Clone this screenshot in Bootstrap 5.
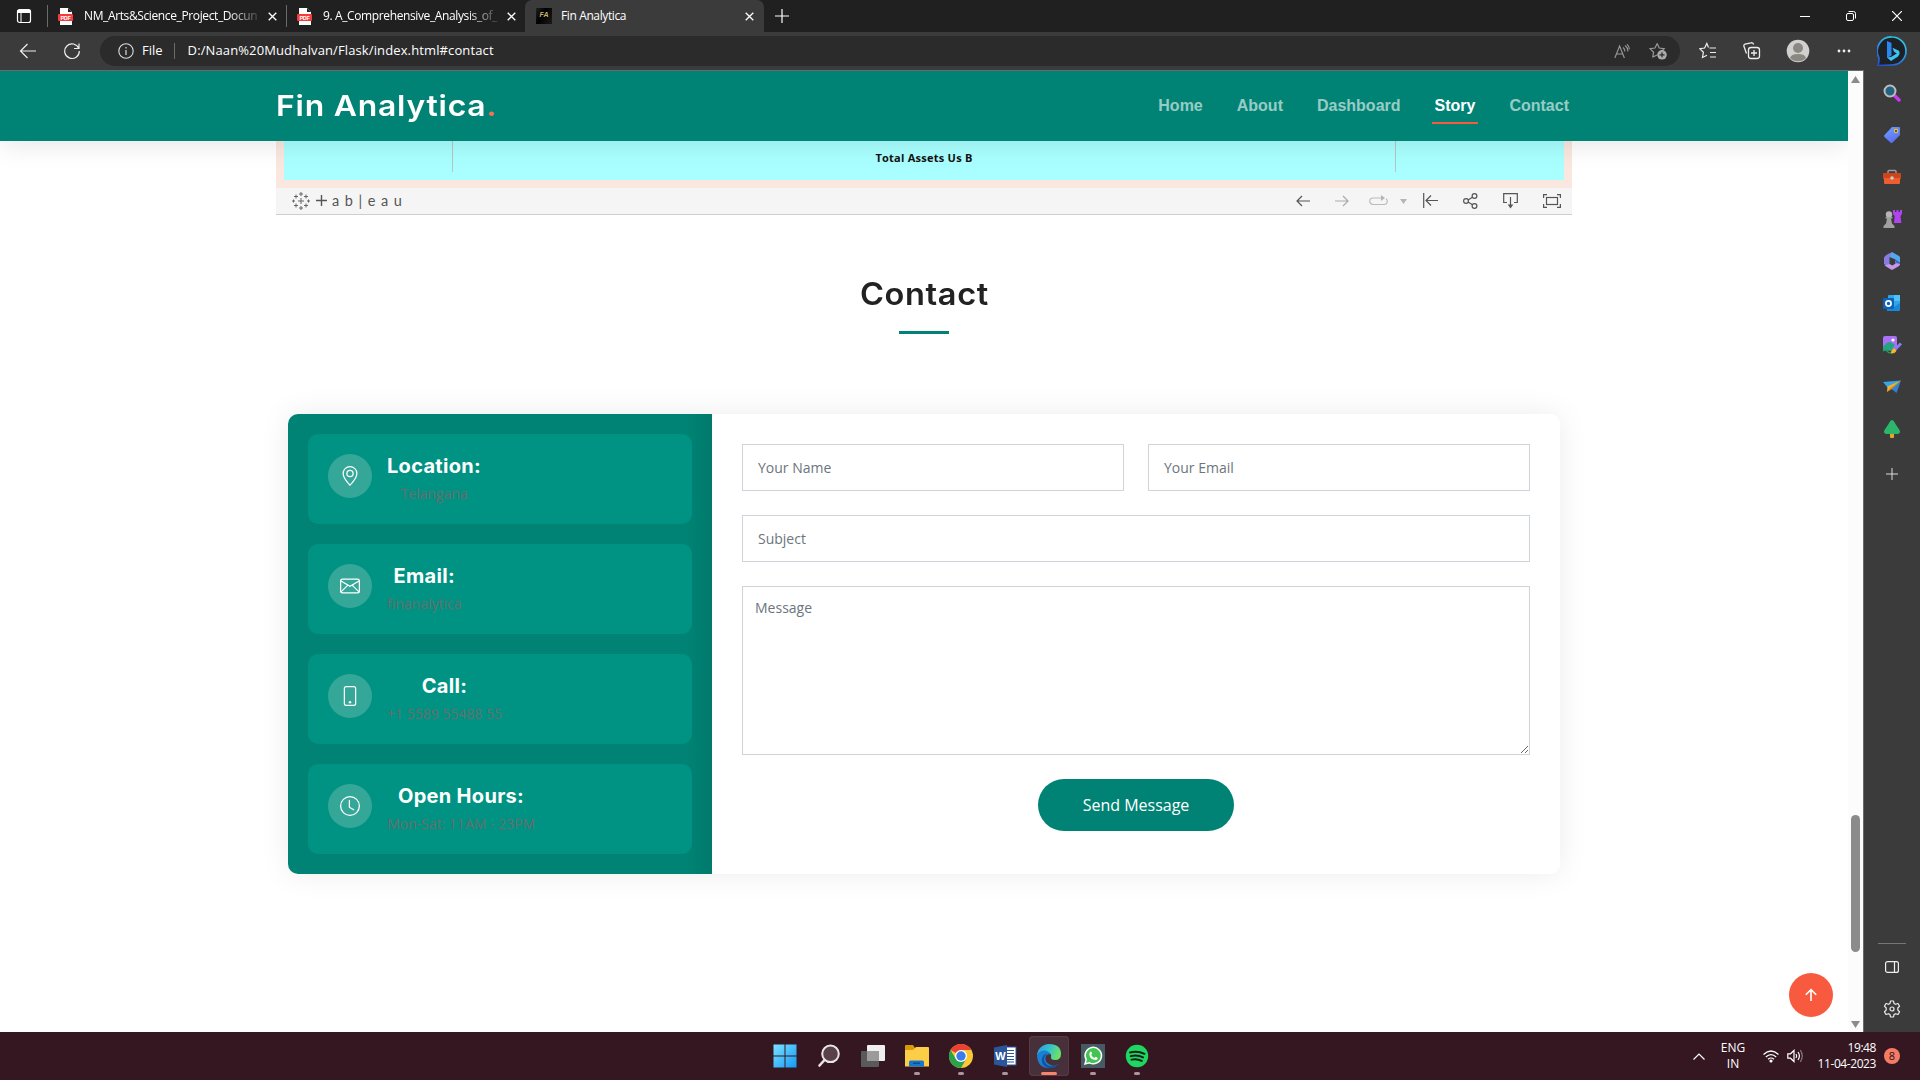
<!DOCTYPE html>
<html lang="en">
<head>
<meta charset="utf-8">
<title>Fin Analytica</title>
<link href="https://cdn.jsdelivr.net/npm/bootstrap@5.3.0/dist/css/bootstrap.min.css" rel="stylesheet">
<style>
html,body{height:100%;overflow:hidden}
body{font-family:"Open Sans",sans-serif;color:#444;background:#fff;font-size:16px}
svg{display:block;flex:none}
.desk{width:1920px;height:1080px}
/* browser chrome */
.tabstrip{height:32px;background:#202020;color:#fff;font:12px "Open Sans",sans-serif}
.tab-cell{height:32px;width:238px;padding:0 9px 0 10px;letter-spacing:-.38px}
.tab-cell.current{width:239px;background:#3b3b3b;border-radius:7px 7px 0 0;padding:0 10px 0 11px}
.tab-title{white-space:nowrap;width:176px;height:20px;line-height:20px}
.tab-title.fade-end{-webkit-mask-image:linear-gradient(90deg,#000 82%,transparent 102%);mask-image:linear-gradient(90deg,#000 82%,transparent 102%)}
.tab-rule{width:1px;height:22px;background:#6b6b6b}
.fav{width:16px;height:16px;background:linear-gradient(120deg,#222,#000 40%,#1b1b1b);color:#c9b26a;font:italic bold 7px/13px "Liberation Sans",sans-serif;text-align:center;letter-spacing:0}
.toolbar-row{height:38px;background:#3b3b3b;color:#fff}
.addr{height:30px;width:1580px;margin-left:19px;background:#2b2b2b;border-radius:15px;font-size:13px;padding:0 13px 0 18px}
.url-text{letter-spacing:.12px}
.side{width:56px;background:#3b3b3b;padding-top:2px}
.side-item{height:42px}
.page-col{width:1864px;border-top:1px solid #6a6a6a;border-right:1px solid #6a6a6a}
.page-view{width:1848px;height:961px;background:#fff;overflow:hidden}
.scroller{width:15px;background:#fcfcfc;padding:5px 3px 4px}
.thumb{width:9px;height:137px;border-radius:5px;background:#8b8b8b;margin-top:732px;margin-bottom:69px}
/* site */
.site-head{height:70px;background:#008374;box-shadow:0 0 30px rgba(0,0,0,.13);position:relative;z-index:2}
.site-name{font:600 29px/70px Inter,sans-serif;color:#fff;letter-spacing:.7px;white-space:nowrap;transform:scaleX(1.1);transform-origin:0 50%}
.site-name span{color:#f96f59}
.menu-link{font:bold 16px/24px "Liberation Sans",sans-serif;color:rgba(255,255,255,.6);text-decoration:none;position:relative}
.menu-link.active{color:#fff}
.menu-link.active::after{content:"";position:absolute;left:-3px;right:-3px;bottom:-6px;height:2px;background:#f85a40}
.viz{width:1296px;margin:0 auto}
.viz-frame{background:#fae8e0;padding:0 8px 8px;height:47px}
.viz-body{background:#a9ffff;height:39px;color:#111;font:bold 11px/34px "Open Sans",sans-serif;letter-spacing:.25px}
.viz-cell{height:31px;border-right:1px solid #b9c4c4}
.viz-bar{height:27px;background:#f5f5f5;border-bottom:1px solid #cfcfcf;padding:0 11px 1px 16px}
.tab-word{font:14.5px/24px Lato,sans-serif;color:#555;letter-spacing:5.6px}
.sect-title{font:600 31px/38px Inter,sans-serif;color:#222;letter-spacing:.6px;margin:60px 0 18px;transform:scaleX(1.05)}
.sect-rule{width:50px;height:3px;background:#008374}
.contact-box{width:1272px;height:460px;border-radius:10px;margin:80px auto 0;box-shadow:0 0 30px rgba(0,0,0,.08)}
.info-pane{width:424px;background:linear-gradient(90deg,#008374 94%,#007a6c);border-radius:10px 0 0 10px;padding:20px;gap:20px}
.info-item{height:90px;border-radius:10px;background:#009282;padding:20px}
.info-icon{width:44px;height:44px;border-radius:50%;background:#34a799}
.info-copy{margin-left:15px}
.info-head{font:700 20px/24px Inter,sans-serif;color:#fff;margin:0 0 5px;letter-spacing:.3px}
.info-text{font:14px/21px "Open Sans",sans-serif;color:#666f6e;margin:0}
.form-pane{width:848px;padding:30px;background:#fff;border-radius:0 10px 10px 0}
.form-pane .form-control{border-radius:0;font-size:14px;border-color:#ced4da;box-shadow:none}
.form-pane .form-control::placeholder{color:#6c757d;opacity:1}
.form-pane input.form-control{padding:12px 15px;height:47px}
.form-pane textarea.form-control{padding:10px 12px;height:169px}
.send{background:#008374;color:#fff;border:0;border-radius:50px;height:52px;width:196px;font-size:16px}
.to-top{position:absolute;left:1789px;top:902px;width:44px;height:44px;border-radius:50%;background:#f85a40}
/* taskbar */
.taskbar{height:48px;background:#351722;color:#fff;font:12px/16px "Open Sans",sans-serif}
.app{width:40px;height:40px;border-radius:4px;position:relative}
.app.on{background:#48303b;box-shadow:inset 0 0 0 1px #523c45}
.app.run::after{content:"";position:absolute;left:17px;bottom:1px;width:6px;height:3px;border-radius:2px;background:#a8979d}
.app.on::after{left:12px;width:16px;background:#f8846c}
.clock{width:72px;letter-spacing:-.42px}
.note-badge{width:16px;height:16px;border-radius:50%;background:#f47c64;color:#301018;font-size:11px}
</style>
</head>
<body>
<div class="desk d-flex flex-column">
  <div class="tabstrip d-flex align-items-center">
    <svg width="16" height="16" class="ms-3" viewBox="0 0 16 16"><rect x="1.5" y="1.5" width="13" height="13" rx="2" fill="none" stroke="#fff" stroke-width="1.2"/><path d="M1.5 2h13v3h-13z" fill="#fff"/><path d="M5 5v9.500" stroke="#fff"/></svg>
    <div class="tab-rule" style="margin-left:15px"></div>
    <div class="tab-cell d-flex align-items-center">
      <svg width="15" height="17" viewBox="0 0 15 17"><path d="M2 0h8l4 4v13H2z" fill="#fff"/><path d="M10 0v4h4z" fill="#222"/><rect y="6" width="15" height="7" rx="1" fill="#f53b3b"/><text x="7.500" y="11.700" font-size="5.500" font-weight="bold" fill="#fff" text-anchor="middle" font-family="Liberation Sans">PDF</text></svg>
      <div class="tab-title fade-end" style="margin-left:11px">NM_Arts&amp;Science_Project_Docun</div>
      <svg width="9" height="9" class="ms-auto" viewBox="0 0 9 9"><path d="M.7.700l7.600 7.600M8.300.700L.7 8.300" stroke="#fff" stroke-width="1.300"/></svg>
    </div>
    <div class="tab-rule"></div>
    <div class="tab-cell d-flex align-items-center">
      <svg width="15" height="17" viewBox="0 0 15 17"><path d="M2 0h8l4 4v13H2z" fill="#fff"/><path d="M10 0v4h4z" fill="#222"/><rect y="6" width="15" height="7" rx="1" fill="#f53b3b"/><text x="7.500" y="11.700" font-size="5.500" font-weight="bold" fill="#fff" text-anchor="middle" font-family="Liberation Sans">PDF</text></svg>
      <div class="tab-title fade-end" style="margin-left:11px">9. A_Comprehensive_Analysis_of_</div>
      <svg width="9" height="9" class="ms-auto" viewBox="0 0 9 9"><path d="M.7.700l7.600 7.600M8.300.700L.7 8.300" stroke="#fff" stroke-width="1.300"/></svg>
    </div>
    <div class="tab-cell current d-flex align-items-center">
      <div class="fav">FA</div>
      <div class="tab-title" style="margin-left:9px">Fin Analytica</div>
      <svg width="9" height="9" class="ms-auto" viewBox="0 0 9 9"><path d="M.7.700l7.600 7.600M8.300.700L.7 8.300" stroke="#fff" stroke-width="1.300"/></svg>
    </div>
    <svg width="14" height="14" style="margin-left:11px" viewBox="0 0 14 14"><path d="M7 0v14M0 7h14" stroke="#fff" stroke-width="1.200"/></svg>
    <div class="ms-auto d-flex align-items-center" style="gap:36px;padding-right:18px">
      <svg width="10" height="10" viewBox="0 0 10 10"><path d="M0 5.500h10" stroke="#fff"/></svg>
      <svg width="10" height="10" viewBox="0 0 10 10" fill="none" stroke="#fff"><rect x=".5" y="2.500" width="7" height="7" rx="1.500"/><path d="M2.500.500H7.500a2 2 0 0 1 2 2V7.500"/></svg>
      <svg width="10" height="10" viewBox="0 0 10 10"><path d="M0 0l10 10M10 0L0 10" stroke="#fff" stroke-width="1.200"/></svg>
    </div>
  </div>
  <div class="toolbar-row d-flex align-items-center">
    <svg width="18" height="16" style="margin-left:19px" viewBox="0 0 18 16"><path d="M17 8H1.500M8.500 1L1.500 8l7 7" fill="none" stroke="#eee" stroke-width="1.200"/></svg>
    <svg width="18" height="18" style="margin-left:26px" viewBox="0 0 18 18"><path d="M15.800 6.500A7.300 7.300 0 1 0 16.300 9M16 1.500v5h-5" fill="none" stroke="#eee" stroke-width="1.200"/></svg>
    <div class="addr d-flex align-items-center">
      <svg width="16" height="16" viewBox="0 0 16 16"><circle cx="8" cy="8" r="7.200" fill="none" stroke="#ddd" stroke-width="1.100"/><path d="M8 7v5M8 4v1.500" stroke="#ddd" stroke-width="1.200"/></svg>
      <span class="ms-2">File</span>
      <div class="tab-rule" style="height:16px;margin:0 13px 0 11px"></div>
      <span class="url-text">D:/Naan%20Mudhalvan/Flask/index.html#contact</span>
      <svg width="16" height="15" class="ms-auto" viewBox="0 0 16 15" fill="none" stroke="#999" stroke-width="1.100"><path d="M.8 14L5.600 2l4.800 12M2.400 10h6.400M9 3.500q2 1.500 1.800 4M11 1.500q3.300 2.500 2.800 6M13 .3q2.600 2.500 2.400 5"/></svg>
      <svg width="18" height="18" style="margin-left:19px" viewBox="0 0 18 18"><path d="M8.200 1.500l2 4.500 5 .6-3 3M4.800 15l-1-0 .8-4.800L1 6.700l5-.7 2.200-4.500M4 15l4-2" fill="none" stroke="#999" stroke-width="1.200"/><circle cx="13" cy="12.800" r="4.800" fill="#aaa"/><path d="M13 10.300v5M10.500 12.800h5" stroke="#2b2b2b" stroke-width="1.200"/></svg>
    </div>
    <div class="d-flex align-items-center" style="margin-left:19px">
      <svg width="18" height="18" viewBox="0 0 18 18" fill="none" stroke="#eee" stroke-width="1.200"><path d="M10.500 6H17M11 10.500h6M11 15h6M9.500 5.500L7.800 1.500 5.600 6 .8 6.700l3.600 3.500L3.500 15.500 8 13.300"/></svg>
      <svg width="18" height="18" style="margin-left:26px" viewBox="0 0 18 18" fill="none" stroke="#eee" stroke-width="1.300"><rect x="5.500" y="5.500" width="11" height="11" rx="2.500"/><path d="M11 8v6M8 11h6M3.500 11.500L1 4.500A2 2 0 0 1 2 2L8 .8A2 2 0 0 1 10.500 2.500"/></svg>
      <svg width="24" height="24" style="margin-left:25px" viewBox="0 0 24 24"><circle cx="12" cy="12" r="11.300" fill="#d2d0ce"/><circle cx="12" cy="9" r="5" fill="#8b8783"/><path d="M4 19q1-4 8-4t8 4a11.300 11.300 0 0 1-16 0" fill="#8b8783"/></svg>
      <svg width="14" height="4" style="margin-left:27px" viewBox="0 0 14 4" fill="#eee"><circle cx="2" cy="2" r="1.400"/><circle cx="7" cy="2" r="1.400"/><circle cx="12" cy="2" r="1.400"/></svg>
      <svg width="30" height="30" style="margin-left:26px" viewBox="0 0 30 30"><defs><linearGradient id="bi" x1="0" y1="1" x2=".5" y2="0"><stop offset="0" stop-color="#2448d8"/><stop offset="1" stop-color="#2cc0e8"/></linearGradient></defs><path d="M15 1a14 14 0 1 1 0 28q-7 0-14 .6 1.200-3 .9-8A14 14 0 0 1 15 1z" fill="#1d2024" stroke="url(#bi)" stroke-width="1.700"/><path d="M10 5l4.500 2v12.500L10 22z" fill="#2a86f0"/><path d="M10 21.500l4 3.500 7-4.500q3-3.500.5-6l-6-2.700 1.500 4 2.800 1.600-5.800 3.600z" fill="#3bc4f3"/></svg>
    </div>
  </div>
  <div class="d-flex" style="height:962px">
    <div class="page-col d-flex">
      <main class="page-view position-relative">
        <header class="site-head">
          <div class="container d-flex align-items-center justify-content-between" style="max-width:1320px">
            <div class="site-name">Fin Analytica<span>.</span></div>
            <nav class="d-flex" style="gap:34px;padding-right:3px">
              <a class="menu-link" href="#">Home</a><a class="menu-link" href="#">About</a><a class="menu-link" href="#">Dashboard</a><a class="menu-link active" href="#">Story</a><a class="menu-link" href="#">Contact</a>
            </nav>
          </div>
        </header>
        <div class="viz">
          <div class="viz-frame"><div class="viz-body d-flex">
            <div class="viz-cell" style="width:169px"></div>
            <div class="viz-cell text-center" style="width:943px">Total Assets Us B</div>
          </div></div>
          <div class="viz-bar d-flex align-items-center">
            <svg width="18" height="18" viewBox="0 0 18 18" stroke="#666" fill="none"><path d="M9 6v6M6 9h6M9 0v4M7 2h4M9 14v4M7 16h4M4 2.500v4M2 4.500h4M14 2.500v4M12 4.500h4M4 11.500v4M2 13.500h4M14 11.500v4M12 13.500h4M1.500 7.500v3M0 9h3M16.500 7.500v3M15 9h3"/></svg>
            <svg width="11" height="11" style="margin:0 5px 0 6px" viewBox="0 0 11 11"><path d="M5.500 0v11M0 5.500h11" stroke="#555" stroke-width="1.400"/></svg>
            <span class="tab-word">ab|eau</span>
            <div class="ms-auto d-flex align-items-center" style="gap:25px">
              <svg width="14" height="12" viewBox="0 0 14 12" fill="none" stroke="#555" stroke-width="1.200"><path d="M14 6H1M6 1L1 6l5 5"/></svg>
              <svg width="14" height="12" viewBox="0 0 14 12" fill="none" stroke="#aaa" stroke-width="1.200"><path d="M0 6h13M8 1l5 5-5 5"/></svg>
              <svg width="38" height="12" style="margin:0 -9px 0 -5px" viewBox="0 0 38 12"><path d="M13 3H4a3.200 3.200 0 0 0 0 6.500h11a3.200 3.200 0 0 0 2-5.800" fill="none" stroke="#bbb" stroke-width="1.200"/><path d="M12 0l4 3-4 3zM31 4h7l-3.500 5z" fill="#b5b5b5"/></svg>
              <svg width="15" height="15" viewBox="0 0 15 15" fill="none" stroke="#555" stroke-width="1.200"><path d="M.7 0v15M15 7.500H3M8 2.500l-5 5 5 5"/></svg>
              <svg width="15" height="16" viewBox="0 0 15 16" fill="none" stroke="#555" stroke-width="1.200"><circle cx="3" cy="8" r="2.400"/><circle cx="11.500" cy="3" r="2.400"/><circle cx="11.500" cy="13" r="2.400"/><path d="M5 7l4.500-2.700M5 9l4.500 2.700"/></svg>
              <svg width="15" height="16" viewBox="0 0 15 16"><path d="M4 9.500H.7V.700h13.600v8.800H11M7.500 4v9" fill="none" stroke="#555" stroke-width="1.200"/><path d="M4.700 11.500h5.600L7.500 15.500z" fill="#555"/></svg>
              <svg width="18" height="14" viewBox="0 0 18 14" fill="none" stroke="#555" stroke-width="1.200"><path d="M.6 4V.600H4M14 .6h3.400V4M.6 10v3.400H4M14 13.400h3.400V10"/><rect x="3.500" y="3.500" width="11" height="7"/></svg>
            </div>
          </div>
        </div>
        <section class="d-flex flex-column align-items-center">
          <h2 class="sect-title">Contact</h2>
          <div class="sect-rule"></div>
          <div class="contact-box d-flex">
            <div class="info-pane d-flex flex-column text-center">
              <div class="info-item d-flex"><div class="info-icon d-flex align-items-center justify-content-center"><svg width="20" height="20" viewBox="0 0 16 16" fill="#fff"><path d="M12.166 8.940c-.524 1.062-1.234 2.120-1.960 3.070A31.493 31.493 0 0 1 8 14.580a31.481 31.481 0 0 1-2.206-2.570c-.726-.95-1.436-2.008-1.960-3.070C3.304 7.867 3 6.862 3 6a5 5 0 0 1 10 0c0 .862-.305 1.867-.834 2.940zM8 16s6-5.686 6-10A6 6 0 0 0 2 6c0 4.314 6 10 6 10z"/><path d="M8 8a2 2 0 1 1 0-4 2 2 0 0 1 0 4zm0 1a3 3 0 1 0 0-6 3 3 0 0 0 0 6z"/></svg></div><div class="info-copy"><h4 class="info-head">Location:</h4><p class="info-text">Telangana</p></div></div>
              <div class="info-item d-flex"><div class="info-icon d-flex align-items-center justify-content-center"><svg width="20" height="20" viewBox="0 0 16 16" fill="none" stroke="#fff"><rect x=".5" y="2.500" width="15" height="11" rx="1.500"/><path d="M.8 4L8 8.300 15.200 4M.8 12.700L6.300 7.300M15.200 12.700L9.700 7.300"/></svg></div><div class="info-copy"><h4 class="info-head">Email:</h4><p class="info-text">finanalytica</p></div></div>
              <div class="info-item d-flex"><div class="info-icon d-flex align-items-center justify-content-center"><svg width="20" height="20" viewBox="0 0 16 16" fill="#fff"><path d="M11 1a1 1 0 0 1 1 1v12a1 1 0 0 1-1 1H5a1 1 0 0 1-1-1V2a1 1 0 0 1 1-1h6zM5 0a2 2 0 0 0-2 2v12a2 2 0 0 0 2 2h6a2 2 0 0 0 2-2V2a2 2 0 0 0-2-2H5z"/><path d="M8 14a1 1 0 1 0 0-2 1 1 0 0 0 0 2z"/></svg></div><div class="info-copy"><h4 class="info-head">Call:</h4><p class="info-text">+1 5589 55488 55</p></div></div>
              <div class="info-item d-flex"><div class="info-icon d-flex align-items-center justify-content-center"><svg width="20" height="20" viewBox="0 0 16 16" fill="#fff"><path d="M8 3.500a.5.500 0 0 0-1 0V9a.5.500 0 0 0 .252.434l3.500 2a.5.500 0 0 0 .496-.868L8 8.710V3.500z"/><path d="M8 16A8 8 0 1 0 8 0a8 8 0 0 0 0 16zm7-8A7 7 0 1 1 1 8a7 7 0 0 1 14 0z"/></svg></div><div class="info-copy"><h4 class="info-head">Open Hours:</h4><p class="info-text">Mon-Sat: 11AM - 23PM</p></div></div>
            </div>
            <form class="form-pane">
              <div class="row gx-4">
                <div class="col-6"><input class="form-control" placeholder="Your Name"></div>
                <div class="col-6"><input class="form-control" placeholder="Your Email"></div>
              </div>
              <input class="form-control mt-4" placeholder="Subject">
              <textarea class="form-control mt-4 d-block" placeholder="Message"></textarea>
              <div class="text-center mt-4"><button type="button" class="send">Send Message</button></div>
            </form>
          </div>
        </section>
        <a class="to-top d-flex align-items-center justify-content-center" href="#"><svg width="14" height="14" viewBox="0 0 14 14"><path d="M7 13V2M1.800 6.800L7 1.600l5.200 5.200" fill="none" stroke="#fff" stroke-width="1.600"/></svg></a>
      </main>
      <div class="scroller"><svg width="9" height="7" viewBox="0 0 9 7"><path d="M4.500 0L9 7H0z" fill="#8b8b8b"/></svg><div class="thumb"></div><svg width="9" height="7" viewBox="0 0 9 7"><path d="M4.500 7L9 0H0z" fill="#8b8b8b"/></svg></div>
    </div>
    <aside class="side d-flex flex-column">
      <div class="side-item d-flex align-items-center justify-content-center"><svg width="18" height="18" viewBox="0 0 18 18"><path d="M11.500 11.500l4.500 4.500" stroke="#c63cf0" stroke-width="3.400" stroke-linecap="round"/><circle cx="7" cy="7" r="5.500" fill="#236382" stroke="#bdbdbd" stroke-width="2"/></svg></div>
      <div class="side-item d-flex align-items-center justify-content-center"><svg width="18" height="18" viewBox="0 0 18 18"><defs><linearGradient id="tg" x1="0" y1="0" x2=".6" y2="1"><stop offset="0" stop-color="#6ba4ff"/><stop offset="1" stop-color="#5c6cf5"/></linearGradient></defs><path d="M9 1h7q1 0 1 1v7L9.500 16.500q-1 1-2 0L1.500 11q-1-1 0-2z" fill="url(#tg)"/><circle cx="13" cy="5" r="1.700" fill="#31406e" stroke="#f2c21a" stroke-width="1.200"/></svg></div>
      <div class="side-item d-flex align-items-center justify-content-center"><svg width="18" height="16" viewBox="0 0 18 16"><path d="M5 5V2.500q0-1 1-1h6q1 0 1 1V5" fill="none" stroke="#9b9b9b" stroke-width="1.500"/><rect y="4" width="18" height="6" rx="1" fill="#cf4418"/><path d="M1 9h16v5q0 1-1 1H2q-1 0-1-1z" fill="#ee5d30"/><circle cx="9" cy="9" r="1.800" fill="#ccc"/></svg></div>
      <div class="side-item d-flex align-items-center justify-content-center"><svg width="19" height="18" viewBox="0 0 19 18"><path d="M10 0h2v2h1.500V0h2v2H17V0h2v4l-1.500 2 .8 7H11l.7-7L10 4z" fill="#b244f0"/><circle cx="6" cy="4.500" r="3.200" fill="#b5b5b5"/><path d="M2.500 7h7v1.600H8l1 4.800 2.500 2.600v2h-11v-2L3 13.400 4 8.600H2.500z" fill="#a0a0a0"/></svg></div>
      <div class="side-item d-flex align-items-center justify-content-center"><svg width="18" height="18" viewBox="0 0 18 18"><path d="M6 1.500L9.500 0 9 3 6.500 5v7.500L4 14.500 1 12V6q.3-2 5-4.500z" fill="#8a7be0"/><path d="M9 0l7 4q1.200.8 1 2v6l-4.500-2V7.500L6.500 5 8 2z" fill="#53a7ec"/><path d="M17 9v3q0 1-1 2l-6 3.500q-1 .7-2 0L1.500 13.500l5-1.500 3 1.500 3-2V9z" fill="#c597e8"/><path d="M12.500 7.500L17 10v2l-4.500-1z" fill="#386ccc"/></svg></div>
      <div class="side-item d-flex align-items-center justify-content-center"><svg width="18" height="18" viewBox="0 0 18 18"><rect x="5" y="1" width="12" height="12" rx="1" fill="#32a4e8"/><path d="M11 1h6v6h-6z" fill="#4dc3f5"/><path d="M4 9l7 4 6-4v7q0 1-1 1H4z" fill="#1789d8"/><rect y="4" width="11" height="11" rx="1" fill="#0b62b8"/><circle cx="5.500" cy="9.500" r="2.600" fill="none" stroke="#fff" stroke-width="1.700"/></svg></div>
      <div class="side-item d-flex align-items-center justify-content-center"><svg width="20" height="19" viewBox="0 0 20 19"><rect x="1" y="0" width="14" height="13" rx="2" fill="#aa70f5"/><circle cx="11" cy="4" r="1.600" fill="#fff"/><path d="M1 11q5-7 9-4l3 2-4 6-8-1z" fill="#25a482"/><path d="M1 15q3-2 4 0t4 2" stroke="#1fa060" stroke-width="1.500" fill="none"/><path d="M19 7.500L12.500 14" stroke="#8b7bf5" stroke-width="3"/><path d="M12.500 12.500q-3.500 0-3.500 5 4 .5 5.500-3z" fill="#f3b925"/></svg></div>
      <div class="side-item d-flex align-items-center justify-content-center"><svg width="18" height="14" viewBox="0 0 18 14"><path d="M0 2L18 .5 5 8z" fill="#36a6ea"/><path d="M18 .5L13.500 13 8 8.500z" fill="#2c83d8"/><path d="M18 .5L4.500 6.500 4 12z" fill="#f2b632"/><path d="M18 .5L7 8l-3 4 5-3z" fill="#d98b1c"/></svg></div>
      <div class="side-item d-flex align-items-center justify-content-center"><svg width="16" height="18" viewBox="0 0 16 18"><rect x="6" y="12" width="4" height="6" rx="1" fill="#e8a422"/><path d="M8 0q1.500 0 3.500 4l4 6q1.500 4-2 4h-11q-3.500 0-2-4l4-6Q6.500 0 8 0z" fill="#2bb66c"/></svg></div>
      <div class="side-item d-flex align-items-center justify-content-center" style="height:48px"><svg width="12" height="12" viewBox="0 0 12 12"><path d="M6 0v12M0 6h12" stroke="#ddd"/></svg></div>
      <div class="mt-auto d-flex flex-column align-items-center">
        <div style="width:28px;height:1px;background:#767676;margin-bottom:17px"></div>
        <svg width="14" height="12" viewBox="0 0 14 12" fill="none" stroke="#eee" stroke-width="1.200"><rect x=".6" y=".6" width="12.800" height="10.800" rx="2"/><path d="M9.500.600v10.800"/></svg>
        <svg width="18" height="18" style="margin:27px 0 14px" viewBox="0 0 18 18" fill="none" stroke="#eee" stroke-width="1.200"><circle cx="9" cy="9" r="2"/><path d="M7.500 1h3l.5 2.400 1.500.9L15 3.500l1.600 2.700-1.800 1.800v2l1.800 1.800L15 14.500l-2.500-.8-1.500.9-.5 2.400h-3L7 14.600l-1.500-.9-2.500.8-1.600-2.700L3.200 10V8L1.400 6.200 3 3.500l2.500.8L7 3.400z" stroke-linejoin="round"/></svg>
      </div>
    </aside>
  </div>
  <footer class="taskbar d-flex align-items-center">
    <div class="d-flex" style="margin-left:765px;gap:4px">
      <div class="app d-flex align-items-center justify-content-center"><svg width="24" height="24" viewBox="0 0 24 24"><defs><linearGradient id="wn" x1="0" y1="0" x2="1" y2="1"><stop offset="0" stop-color="#7be3ff"/><stop offset="1" stop-color="#1398f5"/></linearGradient></defs><path d="M.5.500h11v11H.5zM12.500.500h11v11h-11zM.5 12.500h11v11H.5zM12.500 12.500h11v11h-11z" fill="url(#wn)"/></svg></div>
      <div class="app d-flex align-items-center justify-content-center"><svg width="24" height="24" viewBox="0 0 24 24"><circle cx="13.500" cy="9.800" r="8.300" fill="#5a4049" stroke="#e9e5e6" stroke-width="2"/><path d="M7.500 16L2.500 21.500" stroke="#e9e5e6" stroke-width="2.600" stroke-linecap="round"/></svg></div>
      <div class="app d-flex align-items-center justify-content-center"><svg width="24" height="24" viewBox="0 0 24 24"><rect x="6" y="1" width="18" height="16" rx="1" fill="#f0efef"/><rect x="0" y="7" width="18" height="16" rx="1" fill="#5a5a5a"/><path d="M6 7h12v10H6z" fill="#9b9b9b"/></svg></div>
      <div class="app run d-flex align-items-center justify-content-center"><svg width="24" height="24" viewBox="0 0 24 24"><path d="M0 2q0-1 1-1h7l2 3v4H0z" fill="#d99a09"/><path d="M0 6h8l3-3h12q1 0 1 1v18.500H0z" fill="#fcce47"/><path d="M4 22.500V18q0-1.500 1.500-1.500h12q1.500 0 1.500 1.500v4.500z" fill="#1577cf"/><rect x="8" y="18.500" width="7" height="1.500" fill="#0c4f94"/></svg></div>
      <div class="app run d-flex align-items-center justify-content-center"><svg width="24" height="24" viewBox="0 0 24 24"><circle cx="12" cy="12" r="12" fill="#fcc934"/><path d="M12 12L1.600 6A12 12 0 0 1 22.400 6H12z" fill="#e94235"/><path d="M1.600 6A12 12 0 0 0 12 24l5.200-9L12 12l-5.200 3z" fill="#2ba24c"/><circle cx="12" cy="12" r="6" fill="#fff"/><circle cx="12" cy="12" r="4.700" fill="#3b7ded"/></svg></div>
      <div class="app run d-flex align-items-center justify-content-center"><svg width="24" height="24" viewBox="0 0 24 24"><rect x="11" y="3" width="12" height="18" fill="#fff" stroke="#2b579a"/><path d="M13 6.500h8M13 9.500h8M13 12.500h8M13 15.500h8M13 18h8" stroke="#2b579a"/><path d="M1 3.500L14 1v22L1 20.500z" fill="#2b579a"/><text x="7.500" y="16" font-size="11" font-weight="bold" fill="#fff" text-anchor="middle" font-family="Liberation Sans">W</text></svg></div>
      <div class="app run on d-flex align-items-center justify-content-center"><svg width="24" height="24" viewBox="0 0 24 24"><defs><linearGradient id="e1" x1="0" y1="0" x2="1" y2=".3"><stop offset="0" stop-color="#279fe0"/><stop offset=".55" stop-color="#35c1cc"/><stop offset="1" stop-color="#69e06c"/></linearGradient></defs><path d="M0 12A12 12 0 0 1 12 0q12 0 12 10 0 6-6 6-4.500 0-4-3 .5-1.500-.3-3Q10 6 5 8 1 9 0 12z" fill="url(#e1)"/><path d="M0 12q2-6 8-5.500 4 .5 5.500 4-4-1-5 3-1 6 6.500 8 4 .8 7-2A12 12 0 0 1 12 24Q1 24 0 12z" fill="#1b7fd4"/><path d="M10 9.500q-5 4-2 9t10 3l4-2q-4 5-10 4.500-8-2-7-9 .5-4.500 5-5.500z" fill="#11529e"/></svg></div>
      <div class="app run d-flex align-items-center justify-content-center"><svg width="24" height="24" viewBox="0 0 24 24"><path d="M0 0h24v24H0z" fill="#475a64"/><path d="M4 20l1.200-4.300a8.200 8.200 0 1 1 3.200 3.100z" fill="#42c452" stroke="#fff" stroke-width="1.500"/><path d="M9 8q1-1 1.500 0l.7 1.600-1 1.300q1.200 2.200 3.200 3l1.200-1.200 2 1q.5 1.800-1.800 2.300Q9 15.500 8.300 10.500 8.300 9 9 8z" fill="#fff"/></svg></div>
      <div class="app run d-flex align-items-center justify-content-center"><svg width="24" height="24" viewBox="0 0 24 24"><circle cx="12" cy="12" r="11.200" fill="#1ed760"/><path d="M5 8.500q7.500-2 14.500 1.300M5.800 12.200q6.500-1.700 12.300 1.200M6.500 15.700q5.500-1.300 10.300 1.200" fill="none" stroke="#15201a" stroke-width="1.900" stroke-linecap="round"/></svg></div>
    </div>
    <svg width="12" height="7" style="margin-left:536px" viewBox="0 0 12 7"><path d="M.5 6.500L6 1l5.500 5.500" fill="none" stroke="#fff" stroke-width="1.200"/></svg>
    <div class="text-center" style="margin-left:15px;width:26px">ENG<br>IN</div>
    <svg width="16" height="13" style="margin-left:17px" viewBox="0 0 16 13" fill="none" stroke="#fff" stroke-width="1.200"><path d="M.5 4.500q7.500-7 15 0M2.800 7q5.200-4.800 10.400 0M5 9.300q3-2.600 6 0"/><circle cx="8" cy="11" r="1" fill="#fff"/></svg>
    <svg width="17" height="14" style="margin-left:8px" viewBox="0 0 17 14" fill="none" stroke="#fff" stroke-width="1.200"><path d="M.8 4.800h2.700L7 1.500v11L3.500 9.200H.8zM9 5q1.300 2 0 4M11 3q2.800 4 0 8"/><path d="M13.300 1.200q4 5.800 0 11.600" stroke="#8d7a81"/></svg>
    <div class="text-end clock">19:48<br>11-04-2023</div>
    <div class="note-badge d-flex align-items-center justify-content-center" style="margin-left:8px">8</div>
  </footer>
</div>
<script src="https://cdn.jsdelivr.net/npm/bootstrap@5.3.0/dist/js/bootstrap.bundle.min.js"></script>
</body>
</html>
